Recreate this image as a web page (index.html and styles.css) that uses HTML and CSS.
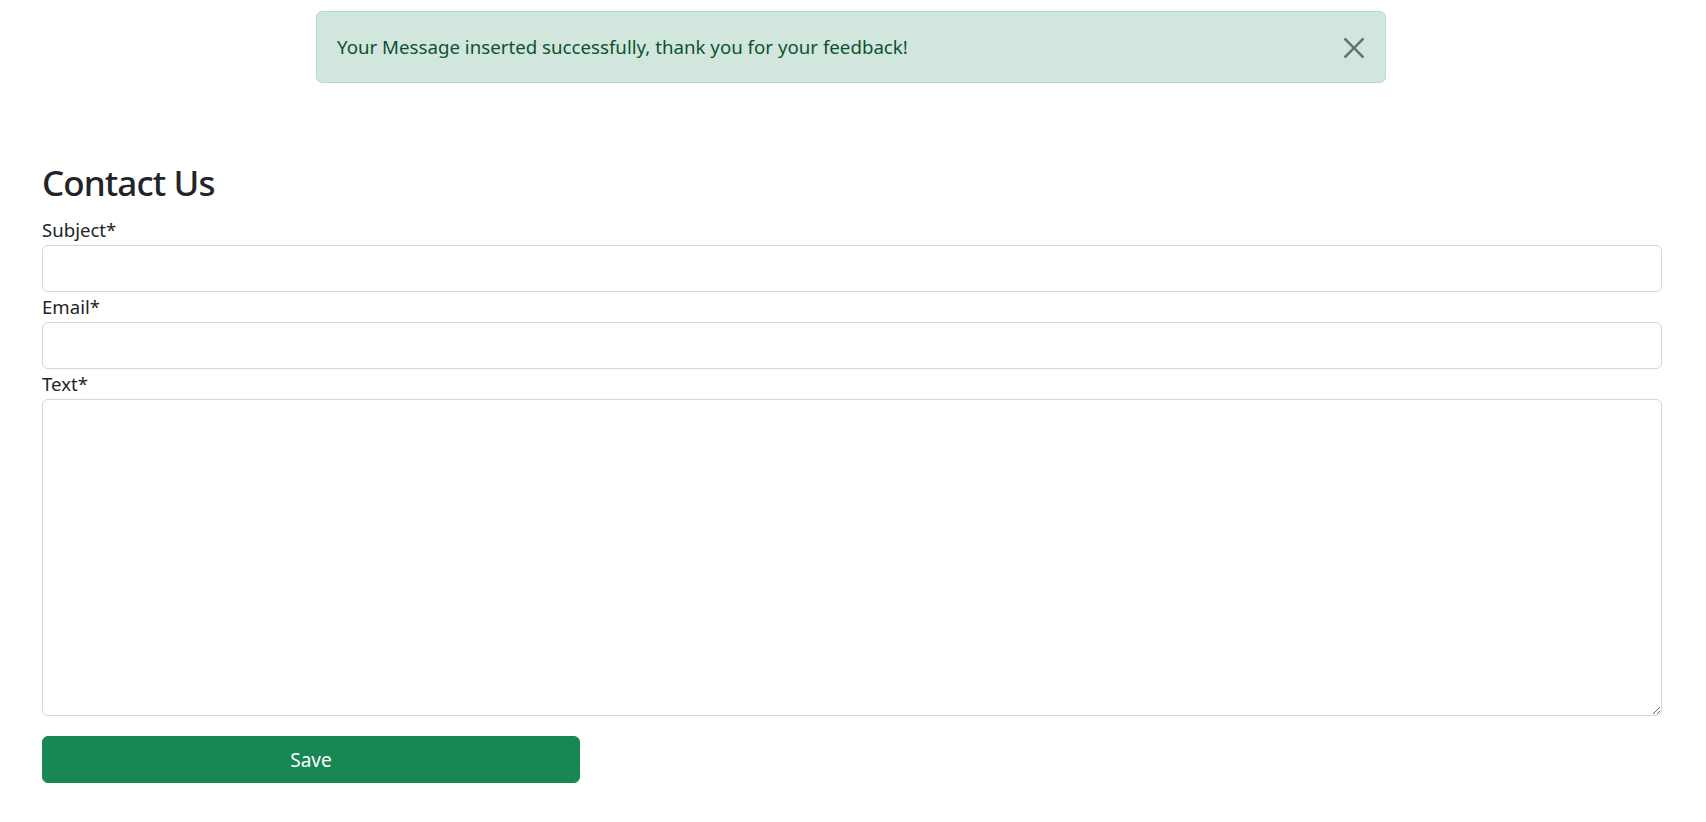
FILE: index.html
```html
<!DOCTYPE html>
<html lang="en">
<head>
<meta charset="utf-8">
<title>Contact Us</title>
<link rel="stylesheet" href="styles.css">
</head>
<body>
<div class="alert-wrap">
  <div class="alert" role="alert">
    <span class="alert-text">Your Message inserted successfully, thank you for your feedback!</span>
    <button class="btn-close" type="button" aria-label="Close">
      <svg viewBox="0 0 16 16" width="20" height="20"><path d="M.293.293a1 1 0 0 1 1.414 0L8 6.586 14.293.293a1 1 0 1 1 1.414 1.414L9.414 8l6.293 6.293a1 1 0 0 1-1.414 1.414L8 9.414l-6.293 6.293a1 1 0 0 1-1.414-1.414L6.586 8 .293 1.707a1 1 0 0 1 0-1.414z"/></svg>
    </button>
  </div>
</div>
<main class="container">
  <h2 class="title">Contact Us</h2>
  <form class="form">
    <label class="label" for="subject">Subject*</label>
    <input class="control" id="subject" type="text">
    <label class="label" for="email">Email*</label>
    <input class="control" id="email" type="email">
    <label class="label" for="text">Text*</label>
    <textarea class="control area" id="text"></textarea>
    <button class="btn-save" type="button">Save</button>
  </form>
</main>
</body>
</html>
```
FILE: styles.css
```css
* { box-sizing: border-box; }
html, body { margin: 0; padding: 0; }
body {
  font-family: "Noto Sans", "Open Sans", sans-serif;
  font-size: 20px;
  line-height: 30px;
  color: #212529;
  background: #fff;
}
.alert-wrap {
  padding: 11px 0 0 316px;
}
.alert {
  position: relative;
  width: 1070px;
  height: 72px;
  padding: 20px 60px 20px 20px;
  background: #d1e7dd;
  border: 1px solid #badbcc;
  border-radius: 6px;
  color: #0f5132;
}
.alert-text {
  font-size: 18.7px;
}
.btn-close {
  position: absolute;
  top: 25px;
  right: 20px;
  width: 22px;
  height: 22px;
  padding: 1px;
  border: 0;
  background: transparent;
  opacity: .5;
  display: flex;
  align-items: center;
  justify-content: center;
}
.btn-close svg { display: block; fill: #000; }
.container {
  padding: 77px 44px 0 42px;
}
.title {
  margin: 0 0 10px;
  font-size: 35px;
  line-height: 45px;
  font-weight: 500;
  letter-spacing: -0.9px;
  color: #212529;
}
.form {
  display: flex;
  flex-direction: column;
  align-items: flex-start;
}
.label {
  display: block;
  height: 30px;
  font-size: 18.6px;
}
.control {
  display: block;
  width: 100%;
  height: 47px;
  padding: 7px 15px;
  font: inherit;
  color: #212529;
  background: #fff;
  border: 1px solid #d4d6d9;
  border-radius: 6px;
}
.area {
  height: 317px;
  resize: vertical;
}
.btn-save {
  margin-top: 20px;
  width: 538px;
  height: 47px;
  padding: 0;
  font: inherit;
  font-size: 19px;
  color: #fff;
  background: #198754;
  border: 1px solid #198754;
  border-radius: 6px;
  text-align: center;
}
```
